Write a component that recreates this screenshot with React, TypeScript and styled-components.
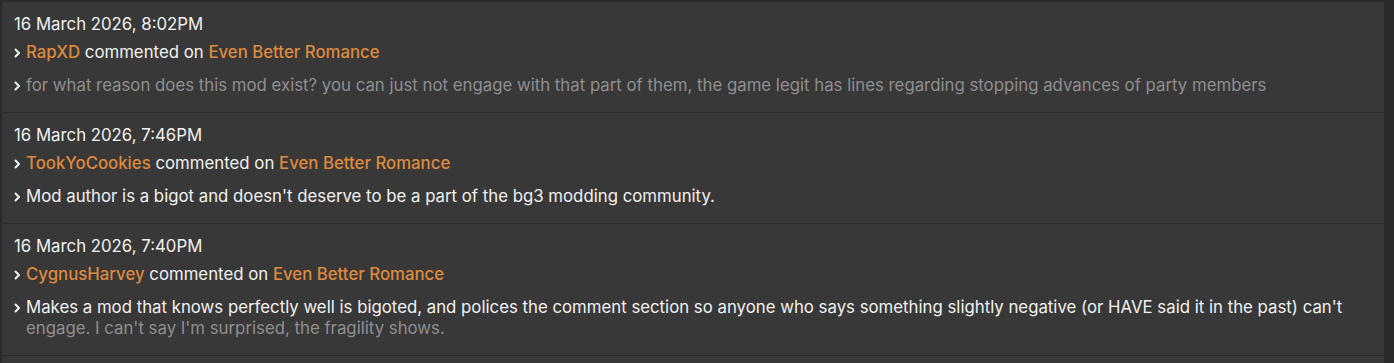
import React from "react";
import styled, { createGlobalStyle } from "styled-components";

const Global = createGlobalStyle`
  html, body { margin: 0; padding: 0; background: #2a2a2c; }
  body { font-family: Inter, "Noto Sans", sans-serif; }
`;

const Page = styled.div`
  display: flex;
  padding: 2px 10px 0 2px;
  height: 361px;
  overflow: hidden;
`;

const Panel = styled.div`
  flex: 1;
  background: #383838;
  display: flex;
  flex-direction: column;
`;

const Item = styled.div`
  padding: 11px 12px 16px 12px;
  border-bottom: 1px solid #2a2a2a;
  display: flex;
  flex-direction: column;
`;

const DateLine = styled.div`
  font-size: 16.8px;
  line-height: 22px;
  color: #f2f2f2;
`;

const Row = styled.div<{ $gap: number }>`
  display: flex;
  align-items: flex-start;
  gap: 5px;
  margin-top: ${(p) => p.$gap}px;
  font-size: 16.8px;
  line-height: 22px;
`;

const Chevron = styled.svg`
  flex: none;
  width: 7px;
  height: 22px;
`;

const Meta = styled.div`
  color: #f2f2f2;
`;

const Link = styled.span`
  color: #de8a3e;
  font-weight: 550;
`;

const Comment = styled.div<{ $faded?: boolean }>`
  color: ${(p) => (p.$faded ? "#8f8f8f" : "#f2f2f2")};
  line-height: 21px;
  padding-top: 1px;
`;

const Faded = styled.span`
  color: #8f8f8f;
`;

const Arrow = () => (
  <Chevron viewBox="0 0 7 22">
    <path d="M1.5 8.5 L5 12 L1.5 15.5" fill="none" stroke="#f2f2f2" strokeWidth="2" strokeLinecap="round" strokeLinejoin="round" />
  </Chevron>
);

type Entry = { date: string; user: string; body: React.ReactNode; faded?: boolean };

const entries: Entry[] = [
  {
    date: "16 March 2026, 8:02PM",
    user: "RapXD",
    body: "for what reason does this mod exist? you can just not engage with that part of them, the game legit has lines regarding stopping advances of party members",
    faded: true,
  },
  {
    date: "16 March 2026, 7:46PM",
    user: "TookYoCookies",
    body: "Mod author is a bigot and doesn't deserve to be a part of the bg3 modding community.",
  },
  {
    date: "16 March 2026, 7:40PM",
    user: "CygnusHarvey",
    body: (
      <>
        Makes a mod that knows perfectly well is bigoted, and polices the comment section so anyone who says something slightly negative (or HAVE said it in the past) can't{" "}
        <Faded>engage. I can't say I'm surprised, the fragility shows.</Faded>
      </>
    ),
  },
];

export default function App() {
  return (
    <>
      <Global />
      <Page>
        <Panel>
          {entries.map((e) => (
            <Item key={e.date}>
              <DateLine>{e.date}</DateLine>
              <Row $gap={6}>
                <Arrow />
                <Meta>
                  <Link>{e.user}</Link> commented on <Link>Even Better Romance</Link>
                </Meta>
              </Row>
              <Row $gap={11}>
                <Arrow />
                <Comment $faded={e.faded}>{e.body}</Comment>
              </Row>
            </Item>
          ))}
        </Panel>
      </Page>
    </>
  );
}
